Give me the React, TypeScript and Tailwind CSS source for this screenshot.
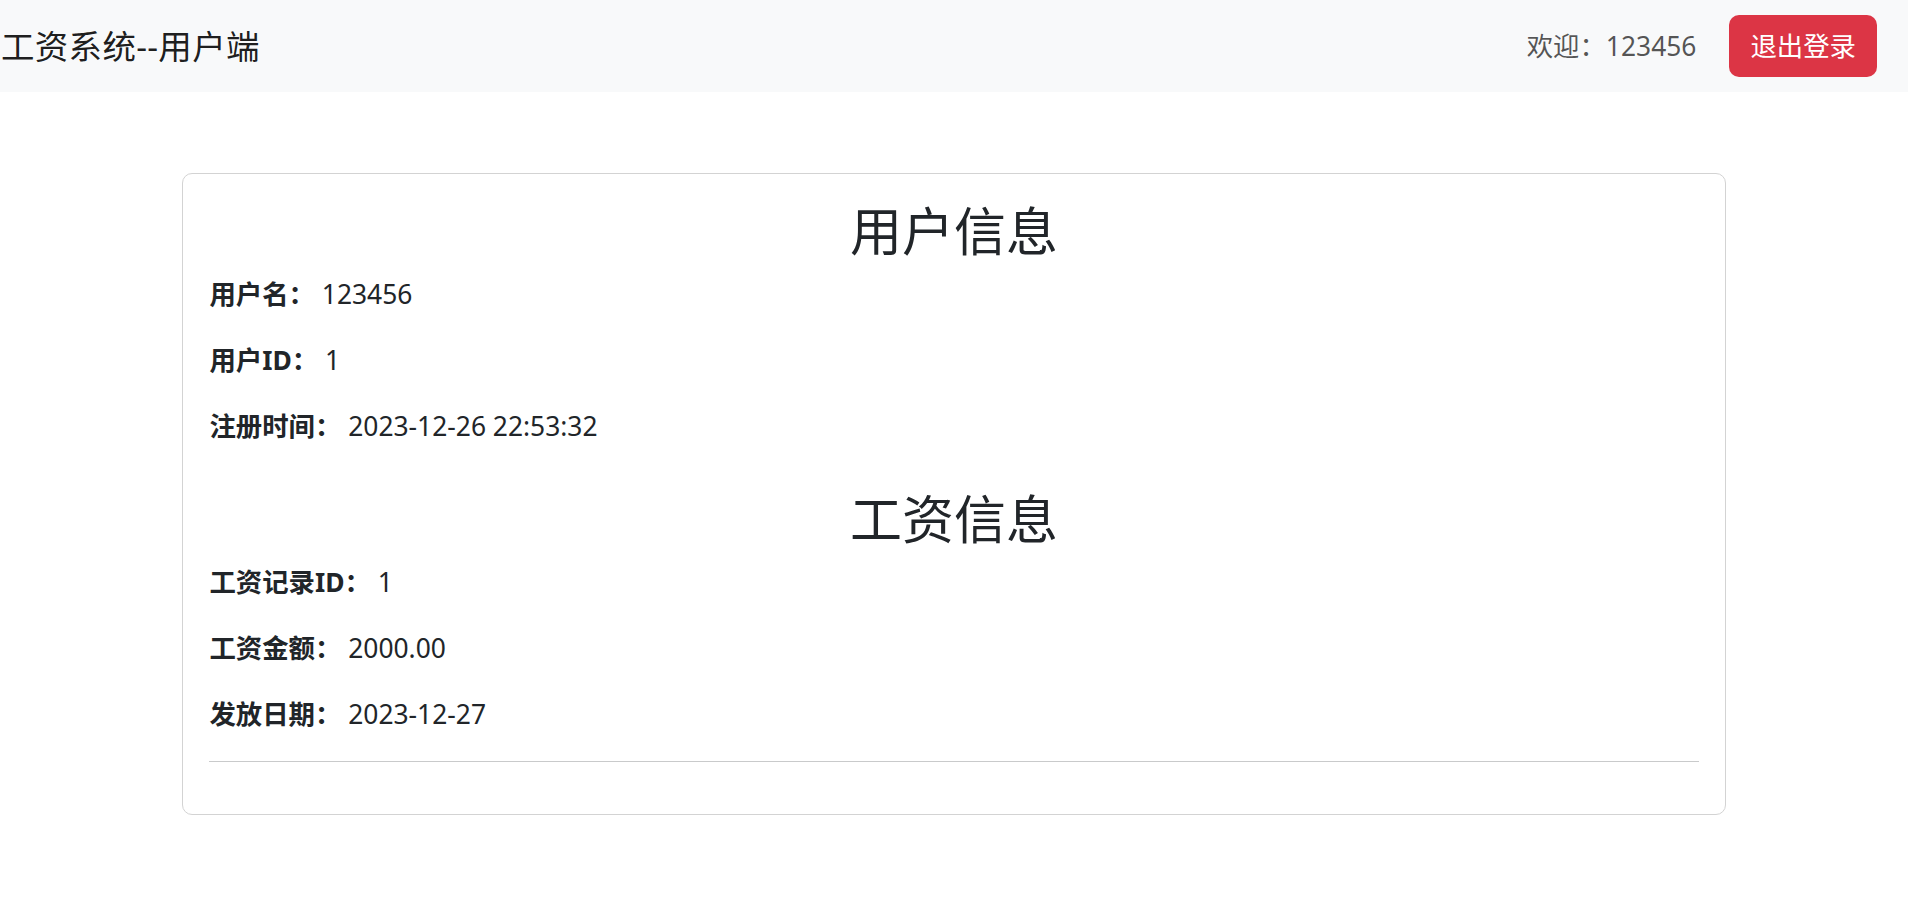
import React from 'react';

const FONT = "font-['Noto_Sans','Noto_Sans_CJK_SC',sans-serif]";

const userRows = [
  { label: '用户名：', value: '123456' },
  { label: '用户ID：', value: '1' },
  { label: '注册时间：', value: '2023-12-26 22:53:32' },
];

const salaryRows = [
  { label: '工资记录ID：', value: '1' },
  { label: '工资金额：', value: '2000.00' },
  { label: '发放日期：', value: '2023-12-27' },
];

const InfoRow: React.FC<{ label: string; value: string }> = ({ label, value }) => (
  <p className="text-[26.4px] leading-[39.6px] mb-[26.4px] text-[#212529]">
    <strong className="font-bold">{label}</strong> {value}
  </p>
);

const App: React.FC = () => {
  return (
    <div className={`min-h-screen bg-white ${FONT}`}>
      {/* Navbar */}
      <nav className="h-[92px] bg-[#f8f9fa] flex items-center justify-between">
        <span className="pl-[1px] text-[33.5px] tracking-[0.3px] leading-[50px] text-[rgba(0,0,0,0.9)]">工资系统--用户端</span>
        <div className="flex items-center gap-[33px] pr-[31px]">
          <span className="text-[26.4px] leading-[40px] text-[rgba(0,0,0,0.68)]">欢迎：123456</span>
          <button className="h-[62px] px-[21px] rounded-[10px] bg-[#dc3545] text-white text-[26.4px] leading-[40px]">
            退出登录
          </button>
        </div>
      </nav>

      {/* Card */}
      <div className="w-[1544px] mx-auto mt-[81px] border border-[#d3d3d3] rounded-[10px] bg-white">
        <div className="px-[26.4px] pt-[26.4px] pb-[26.4px]">
          <h2 className="text-[52px] leading-[62px] font-normal text-center text-[#212529] mb-[13px]">用户信息</h2>
          {userRows.map((r) => (
            <InfoRow key={r.label} {...r} />
          ))}
          <h2 className="mt-[41px] text-[52px] leading-[62px] font-normal text-center text-[#212529] mb-[13px]">工资信息</h2>
          {salaryRows.map((r) => (
            <InfoRow key={r.label} {...r} />
          ))}
          <hr className="border-0 border-t border-[#c9cacb] mb-[26px]" />
        </div>
      </div>
    </div>
  );
};

export default App;
